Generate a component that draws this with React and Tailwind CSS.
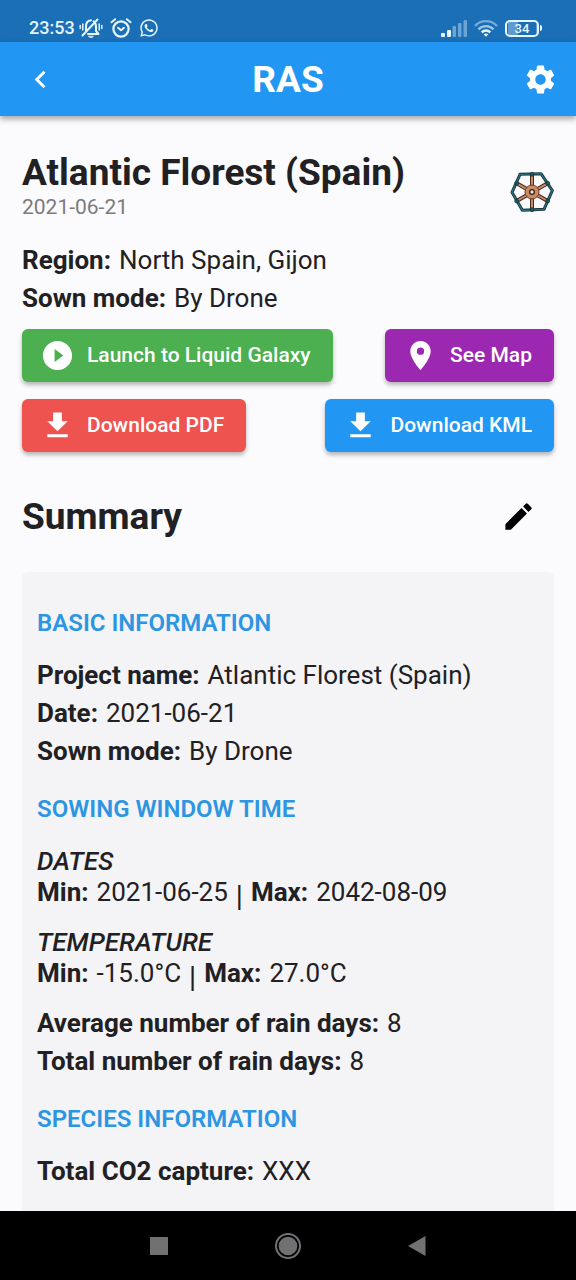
import React from "react";
import {
  MdChevronLeft,
  MdSettings,
  MdPlayCircleFilled,
  MdLocationOn,
  MdFileDownload,
  MdEdit,
} from "react-icons/md";
import { FaWhatsapp } from "react-icons/fa";

function MutedBell() {
  return (
    <svg viewBox="0 0 24 20" className="h-5 w-6" fill="none" stroke="currentColor" strokeLinecap="round">
      <path d="M7 13V8.600C7 5 9 2.600 12 2.300M14.600 3.200C16.200 4.300 17 6.200 17 8.600V13L19.500 16H9" strokeWidth="2" strokeLinejoin="round" />
      <path d="M3.500 17.500L18.500 1.500" strokeWidth="2" />
      <path d="M9.500 18.200H14.500L13 19.500H11Z" fill="currentColor" strokeWidth="0.600" />
      <path d="M3.800 6V12M1.200 7.500V10.500M20.200 6V12M22.800 7.500V10.500" strokeWidth="1.500" />
    </svg>
  );
}

function AlarmClock() {
  return (
    <svg viewBox="0 0 22 20" className="h-5 w-[22px]" fill="none" stroke="currentColor" strokeLinecap="round">
      <circle cx="11" cy="11" r="7.600" strokeWidth="2.200" />
      <path d="M1.500 4.200L5.200 1.300M20.500 4.200L16.800 1.300" strokeWidth="2" />
      <path d="M8 9.800L11 12.300L14 9.800" strokeWidth="2" strokeLinejoin="round" />
    </svg>
  );
}

function Signal() {
  return (
    <svg viewBox="0 0 26 17" className="h-[17px] w-[26px]" fill="currentColor">
      <rect x="0" y="13" width="4" height="4" rx="1" />
      <rect x="6" y="10" width="4" height="7" rx="1" />
      <g opacity="0.400">
        <rect x="11.500" y="6" width="3.500" height="11" rx="1" />
        <rect x="17" y="3" width="3.500" height="14" rx="1" />
        <rect x="22.500" y="0" width="3.500" height="17" rx="1" />
      </g>
    </svg>
  );
}

function Wifi() {
  return (
    <svg viewBox="0 0 24 18" className="h-[18px] w-6" fill="none" stroke="currentColor">
      <path d="M1 7C7 0.500 17 0.500 23 7" strokeWidth="2.400" opacity="0.450" />
      <path d="M4.500 10.300C8.600 6 15.400 6 19.500 10.300" strokeWidth="2.400" opacity="0.650" />
      <path d="M7.700 13.300C10.200 10.800 13.800 10.800 16.300 13.300" strokeWidth="2.400" />
      <path d="M9.600 15.200Q12 13.600 14.400 15.200L12 17.800Z" fill="currentColor" stroke="none" />
    </svg>
  );
}

function Battery() {
  return (
    <span className="flex items-center gap-px">
      <span className="flex h-[17px] w-[34px] items-center justify-center rounded-[5px] border-2 border-current bg-[linear-gradient(to_right,#5d9bd0_34%,transparent_34%)] bg-origin-content p-px text-[13px] leading-none font-medium">
        34
      </span>
      <span className="h-1.5 w-0.5 rounded-r bg-current" />
    </span>
  );
}

function ValveWheel() {
  return (
    <svg viewBox="60 61 132 126" className="mt-3 h-[42px] w-11" role="img" aria-label="Project seed wheel">
      <g stroke="#4b2a20" strokeWidth="12">
        <path d="M126 72V176M80 98L173 151M173 98L80 151" />
      </g>
      <g stroke="#c98a66" strokeWidth="6">
        <path d="M126 72V176M80 98L173 151M173 98L80 151" />
      </g>
      <circle cx="126" cy="124" r="21" fill="#c98a66" stroke="#6b3f2c" strokeWidth="3" />
      <path d="M90 71L153 69L187 120L162 176L97 179L66 125Z" fill="none" stroke="#17343f" strokeWidth="9" strokeLinejoin="round" />
      <path d="M90 71L153 69L187 120L162 176L97 179L66 125Z" fill="none" stroke="#2b7079" strokeWidth="4" strokeLinejoin="round" />
      <g fill="#1d5a57" stroke="#142f38" strokeWidth="2">
        <circle cx="126" cy="71" r="6" />
        <circle cx="126" cy="177" r="6" />
        <circle cx="80" cy="98" r="6" />
        <circle cx="173" cy="98" r="6" />
        <circle cx="80" cy="151" r="6" />
        <circle cx="173" cy="151" r="6" />
      </g>
      <circle cx="126" cy="124" r="7" fill="#f3e3d3" stroke="#3a2018" strokeWidth="4" />
    </svg>
  );
}

function ActionButton({ icon: Icon, color, children }) {
  return (
    <button
      type="button"
      className={`flex h-[53px] items-center gap-3 rounded-md pr-[22px] pl-[18px] text-[21px] font-medium text-white shadow-[0_3px_4px_rgba(0,0,0,0.28)] ${color}`}
    >
      <Icon className="size-[35px]" />
      {children}
    </button>
  );
}

function Field({ label, children }) {
  return (
    <p className="flex gap-2">
      <b>{label}</b>
      <span>{children}</span>
    </p>
  );
}

function Range({ title, min, max }) {
  return (
    <div>
      <p className="font-medium italic">{title}</p>
      <div className="flex h-[34px] items-start">
        <Field label="Min:">{min}</Field>
        <span className="px-2 text-[29px] leading-[38px]">|</span>
        <Field label="Max:">{max}</Field>
      </div>
    </div>
  );
}

function SectionTitle({ children }) {
  return <h3 className="text-[24px] leading-[29px] font-semibold text-[#2d96e3]">{children}</h3>;
}

export default function App() {
  return (
    <div className="flex min-h-screen flex-col bg-[#fbfafc] font-['Roboto',sans-serif] text-[26px] leading-[31px] text-[#212023]">
      <div className="flex h-[42px] items-center justify-between bg-[#1a6fb7] pt-3.5 pr-[34px] pl-[29px] text-[#e6f6fd]">
        <div className="flex items-center gap-[7px]">
          <div className="flex items-center gap-1">
            <span className="text-[18px] leading-5 font-medium">23:53</span>
            <MutedBell />
          </div>
          <AlarmClock />
          <FaWhatsapp className="size-5" />
        </div>
        <div className="flex items-center gap-[7px]">
          <Signal />
          <Wifi />
          <Battery />
        </div>
      </div>

      <header className="z-10 grid h-[74px] grid-cols-[1fr_auto_1fr] items-center bg-[#2296f3] px-[18px] text-white shadow-[0_3px_6px_rgba(0,0,0,0.35)]">
        <button type="button" aria-label="Back" className="justify-self-start pl-[5px]">
          <MdChevronLeft className="size-[35px]" />
        </button>
        <h1 className="text-[37px] leading-[43px] font-bold">RAS</h1>
        <button type="button" aria-label="Settings" className="justify-self-end">
          <MdSettings className="size-[35px]" />
        </button>
      </header>

      <main className="flex flex-1 flex-col px-[22px] pt-[35px]">
        <div className="flex items-center justify-between">
          <div>
            <h2 className="text-[37px] leading-[43px] font-bold">Atlantic Florest (Spain)</h2>
            <p className="text-[21px] leading-[27px] text-[#7b7a7d]">2021-06-21</p>
          </div>
          <ValveWheel />
        </div>

        <div className="mt-6 flex flex-col gap-[7px]">
          <Field label="Region:">North Spain, Gijon</Field>
          <Field label="Sown mode:">By Drone</Field>
        </div>

        <div className="mt-[15px] flex flex-col gap-[17px]">
          <div className="flex justify-between">
            <ActionButton icon={MdPlayCircleFilled} color="bg-[#4caf50]">Launch to Liquid Galaxy</ActionButton>
            <ActionButton icon={MdLocationOn} color="bg-[#9c27b0]">See Map</ActionButton>
          </div>
          <div className="flex justify-between">
            <ActionButton icon={MdFileDownload} color="bg-[#ee5350]">Download PDF</ActionButton>
            <ActionButton icon={MdFileDownload} color="bg-[#2296f3]">Download KML</ActionButton>
          </div>
        </div>

        <div className="mt-[43px] flex items-center justify-between pr-[18px]">
          <h2 className="text-[37px] leading-[43px] font-bold">Summary</h2>
          <button type="button" aria-label="Edit summary" className="text-black">
            <MdEdit className="size-[35px]" />
          </button>
        </div>

        <section className="mt-[34px] flex flex-1 flex-col gap-[22px] rounded-t-md bg-[#f4f3f6] px-[15px] pt-[37px] pb-5">
          <SectionTitle>BASIC INFORMATION</SectionTitle>
          <div className="mb-1.5 flex flex-col gap-[7px]">
            <Field label="Project name:">Atlantic Florest (Spain)</Field>
            <Field label="Date:">2021-06-21</Field>
            <Field label="Sown mode:">By Drone</Field>
          </div>

          <SectionTitle>SOWING WINDOW TIME</SectionTitle>
          <div className="mb-1.5 flex flex-col gap-4">
            <Range title="DATES" min="2021-06-25" max="2042-08-09" />
            <Range title="TEMPERATURE" min="-15.0°C" max="27.0°C" />
            <div className="flex flex-col gap-[7px]">
              <Field label="Average number of rain days:">8</Field>
              <Field label="Total number of rain days:">8</Field>
            </div>
          </div>

          <SectionTitle>SPECIES INFORMATION</SectionTitle>
          <Field label="Total CO2 capture:">XXX</Field>
        </section>
      </main>

      <nav className="flex h-[69px] items-center justify-center gap-[99px] bg-black text-[#717073]">
        <button type="button" aria-label="Recent apps" className="p-2">
          <svg viewBox="0 0 18 18" className="size-[18px]" fill="currentColor">
            <rect width="18" height="18" rx="0.500" />
          </svg>
        </button>
        <button type="button" aria-label="Home">
          <svg viewBox="0 0 26 26" className="size-[26px]" fill="currentColor">
            <circle cx="13" cy="13" r="12" fill="none" stroke="currentColor" strokeWidth="2" />
            <circle cx="13" cy="13" r="9.300" />
          </svg>
        </button>
        <button type="button" aria-label="Back to previous screen" className="p-2">
          <svg viewBox="0 0 18 20" className="h-5 w-[18px]" fill="currentColor">
            <path d="M0 10L17.500 0V20Z" />
          </svg>
        </button>
      </nav>
    </div>
  );
}
